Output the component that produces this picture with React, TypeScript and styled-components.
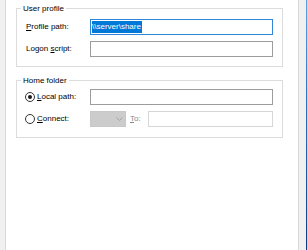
import React from "react";
import styled, { createGlobalStyle } from "styled-components";

const GlobalStyle = createGlobalStyle`
  html, body {
    margin: 0;
    padding: 0;
    background: #f0f0f0;
  }
  body {
    font-family: "Liberation Sans", Arial, sans-serif;
    font-size: 8px;
    color: #000;
  }
`;

const Window = styled.div`
  width: 307px;
  height: 250px;
  display: flex;
  background: #f0f0f0;
  padding-left: 5px;
  box-sizing: border-box;
`;

const Panel = styled.div`
  width: 294px;
  height: 100%;
  box-sizing: border-box;
  background: #ffffff;
  border-left: 1px solid #dadada;
  border-right: 1px solid #dadada;
  padding: 8px 15px 0 10px;
  display: flex;
  flex-direction: column;
`;

const Gutter = styled.div`
  width: 7px;
  flex: none;
`;

const Edge = styled.div`
  width: 1px;
  flex: none;
  background: linear-gradient(#5aa2e6, #2a72c4 40%, #0b3c84);
`;

const Group = styled.div<{ $pad: string; $top?: number }>`
  position: relative;
  border: 1px solid #dcdcdc;
  padding: ${({ $pad }) => $pad};
  margin-top: ${({ $top }) => $top ?? 0}px;
  display: flex;
  flex-direction: column;
  gap: 6px;
`;

const Caption = styled.span`
  position: absolute;
  top: -6px;
  left: 4px;
  padding: 0 2px;
  line-height: 11px;
  background: #ffffff;
`;

const Row = styled.div`
  display: flex;
  align-items: center;
  height: 16px;
`;

const Label = styled.span<{ $muted?: boolean }>`
  width: 64px;
  flex: none;
  line-height: 16px;
  color: ${({ $muted }) => ($muted ? "#8a8a8a" : "#000")};
  white-space: nowrap;
`;

const Key = styled.u`
  text-underline-offset: 1px;
`;

const TextBox = styled.div<{ $state?: "focus" | "disabled" }>`
  flex: 1;
  height: 16px;
  box-sizing: border-box;
  background: #ffffff;
  border: 1px solid
    ${({ $state }) =>
      $state === "focus" ? "#2f86d8" : $state === "disabled" ? "#d6d6d6" : "#9c9c9c"};
  padding: 1px 1px;
  display: flex;
  align-items: stretch;
`;

const Selection = styled.span`
  background: #0078d7;
  color: #ffffff;
  line-height: 12px;
  padding: 0 1px 0 0;
  white-space: nowrap;
`;

const RadioOption = styled.label`
  width: 65px;
  margin-left: -1px;
  flex: none;
  display: flex;
  align-items: center;
  gap: 2px;
  line-height: 16px;
  white-space: nowrap;
`;

const RadioDot = styled.span<{ $checked?: boolean }>`
  width: 10px;
  height: 10px;
  box-sizing: border-box;
  border: 1px solid #333333;
  border-radius: 50%;
  display: flex;
  align-items: center;
  justify-content: center;
  &::after {
    content: "";
    width: 4px;
    height: 4px;
    border-radius: 50%;
    background: ${({ $checked }) => ($checked ? "#1a1a1a" : "transparent")};
  }
`;

const Combo = styled.div`
  width: 36px;
  height: 16px;
  flex: none;
  box-sizing: border-box;
  background: #cccccc;
  border: 1px solid #c8c8c8;
  display: flex;
  align-items: center;
  justify-content: flex-end;
  padding-right: 2px;
`;

const ToLabel = styled(Label)`
  width: 18px;
  padding-left: 4px;
`;

const Chevron = () => (
  <svg width="7" height="4" viewBox="0 0 7 4">
    <polyline points="0.5,0.5 3.5,3.5 6.5,0.5" fill="none" stroke="#a2a2a2" strokeWidth="1" />
  </svg>
);

export default function App() {
  return (
    <>
      <GlobalStyle />
      <Window>
        <Panel>
          <Group $pad="10px 9px 9px 9px">
            <Caption>User profile</Caption>
            <Row>
              <Label>
                <Key>P</Key>rofile path:
              </Label>
              <TextBox $state="focus">
                <Selection>{"\\\\server\\share"}</Selection>
              </TextBox>
            </Row>
            <Row>
              <Label>
                Logon <Key>s</Key>cript:
              </Label>
              <TextBox />
            </Row>
          </Group>

          <Group $pad="8px 9px 10px 9px" $top={13}>
            <Caption>Home folder</Caption>
            <Row>
              <RadioOption>
                <RadioDot $checked />
                <span>
                  <Key>L</Key>ocal path:
                </span>
              </RadioOption>
              <TextBox />
            </Row>
            <Row>
              <RadioOption>
                <RadioDot />
                <span>
                  <Key>C</Key>onnect:
                </span>
              </RadioOption>
              <Combo>
                <Chevron />
              </Combo>
              <ToLabel $muted>
                <Key>T</Key>o:
              </ToLabel>
              <TextBox $state="disabled" />
            </Row>
          </Group>
        </Panel>
        <Gutter />
        <Edge />
      </Window>
    </>
  );
}
